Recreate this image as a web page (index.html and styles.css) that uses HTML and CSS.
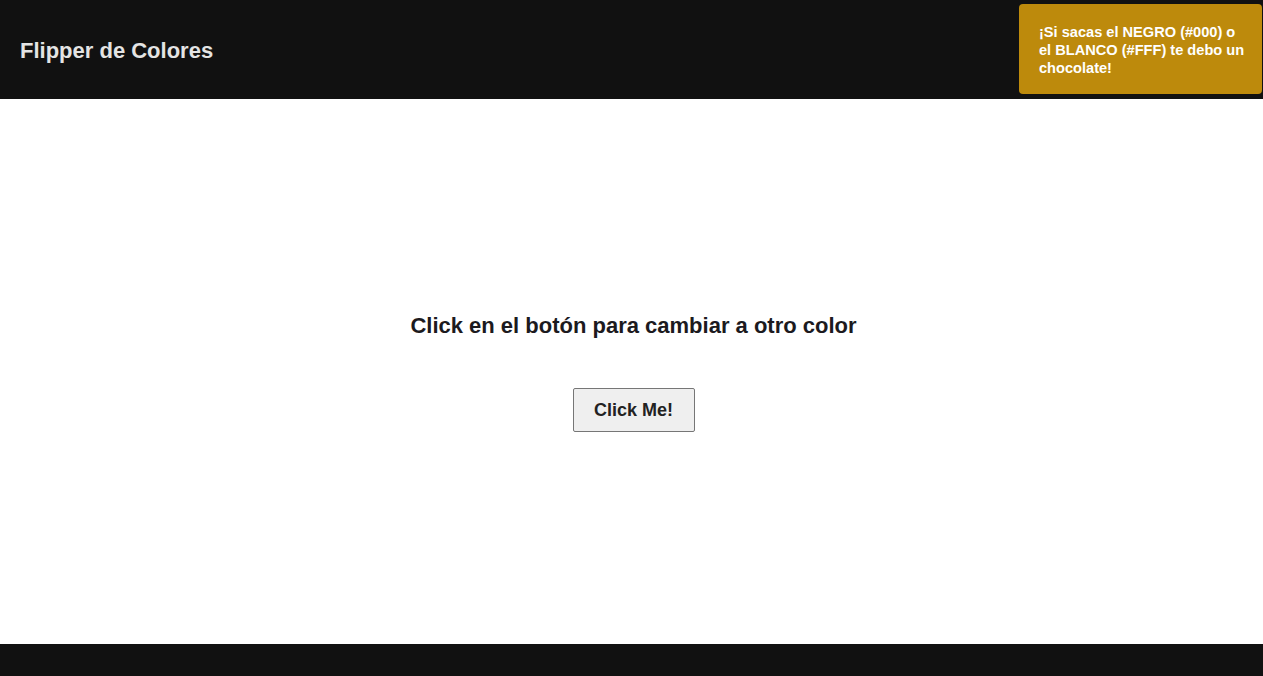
FILE: index.html
```html
<!DOCTYPE html>
<html lang="es">
<head>
<meta charset="utf-8">
<title>Flipper de Colores</title>
<link rel="stylesheet" href="styles.css">
</head>
<body>
<div class="page">
  <header class="header">
    <div class="brand">Flipper de Colores</div>
    <div class="badge">¡Si sacas el NEGRO (#000) o el BLANCO (#FFF) te debo un chocolate!</div>
  </header>
  <main class="main">
    <h2 class="title">Click en el botón para cambiar a otro color</h2>
    <button class="btn">Click Me!</button>
  </main>
  <footer class="footer"></footer>
</div>
</body>
</html>
```
FILE: styles.css
```css
html, body {
  margin: 0;
  padding: 0;
  height: 100%;
}
body {
  font-family: "Liberation Sans", Arial, sans-serif;
  background: #fff;
}
.page {
  display: flex;
  flex-direction: column;
  height: 676px;
}
.header {
  height: 99px;
  background: #111111;
  display: flex;
  align-items: center;
  justify-content: space-between;
  padding-left: 20px;
  padding-right: 1px;
  flex-shrink: 0;
}
.brand {
  color: #e4e4e4;
  font-weight: bold;
  font-size: 22px;
  margin-top: 2px;
}
.badge {
  align-self: flex-start;
  margin-top: 4px;
  height: 90px;
  box-sizing: border-box;
  width: 243px;
  padding: 19px 16px 0 20px;
  background: #bd8a0c;
  border-radius: 4px;
  color: #ffffff;
  font-weight: bold;
  font-size: 14.6px;
  line-height: 18px;
}
.main {
  flex: 1;
  display: flex;
  flex-direction: column;
  align-items: center;
  justify-content: center;
  gap: 50px;
  padding-left: 4px;
  padding-top: 3px;
}
.title {
  margin: 0;
  font-size: 22px;
  line-height: 24px;
  color: #1c1a1e;
  font-weight: bold;
}
.btn {
  width: 122px;
  height: 44px;
  background: #efefef;
  border: 1px solid #767676;
  border-radius: 2px;
  font-family: "Liberation Sans", Arial, sans-serif;
  font-weight: bold;
  font-size: 18px;
  color: #222;
}
.footer {
  height: 32px;
  background: #111111;
  flex-shrink: 0;
}
```
